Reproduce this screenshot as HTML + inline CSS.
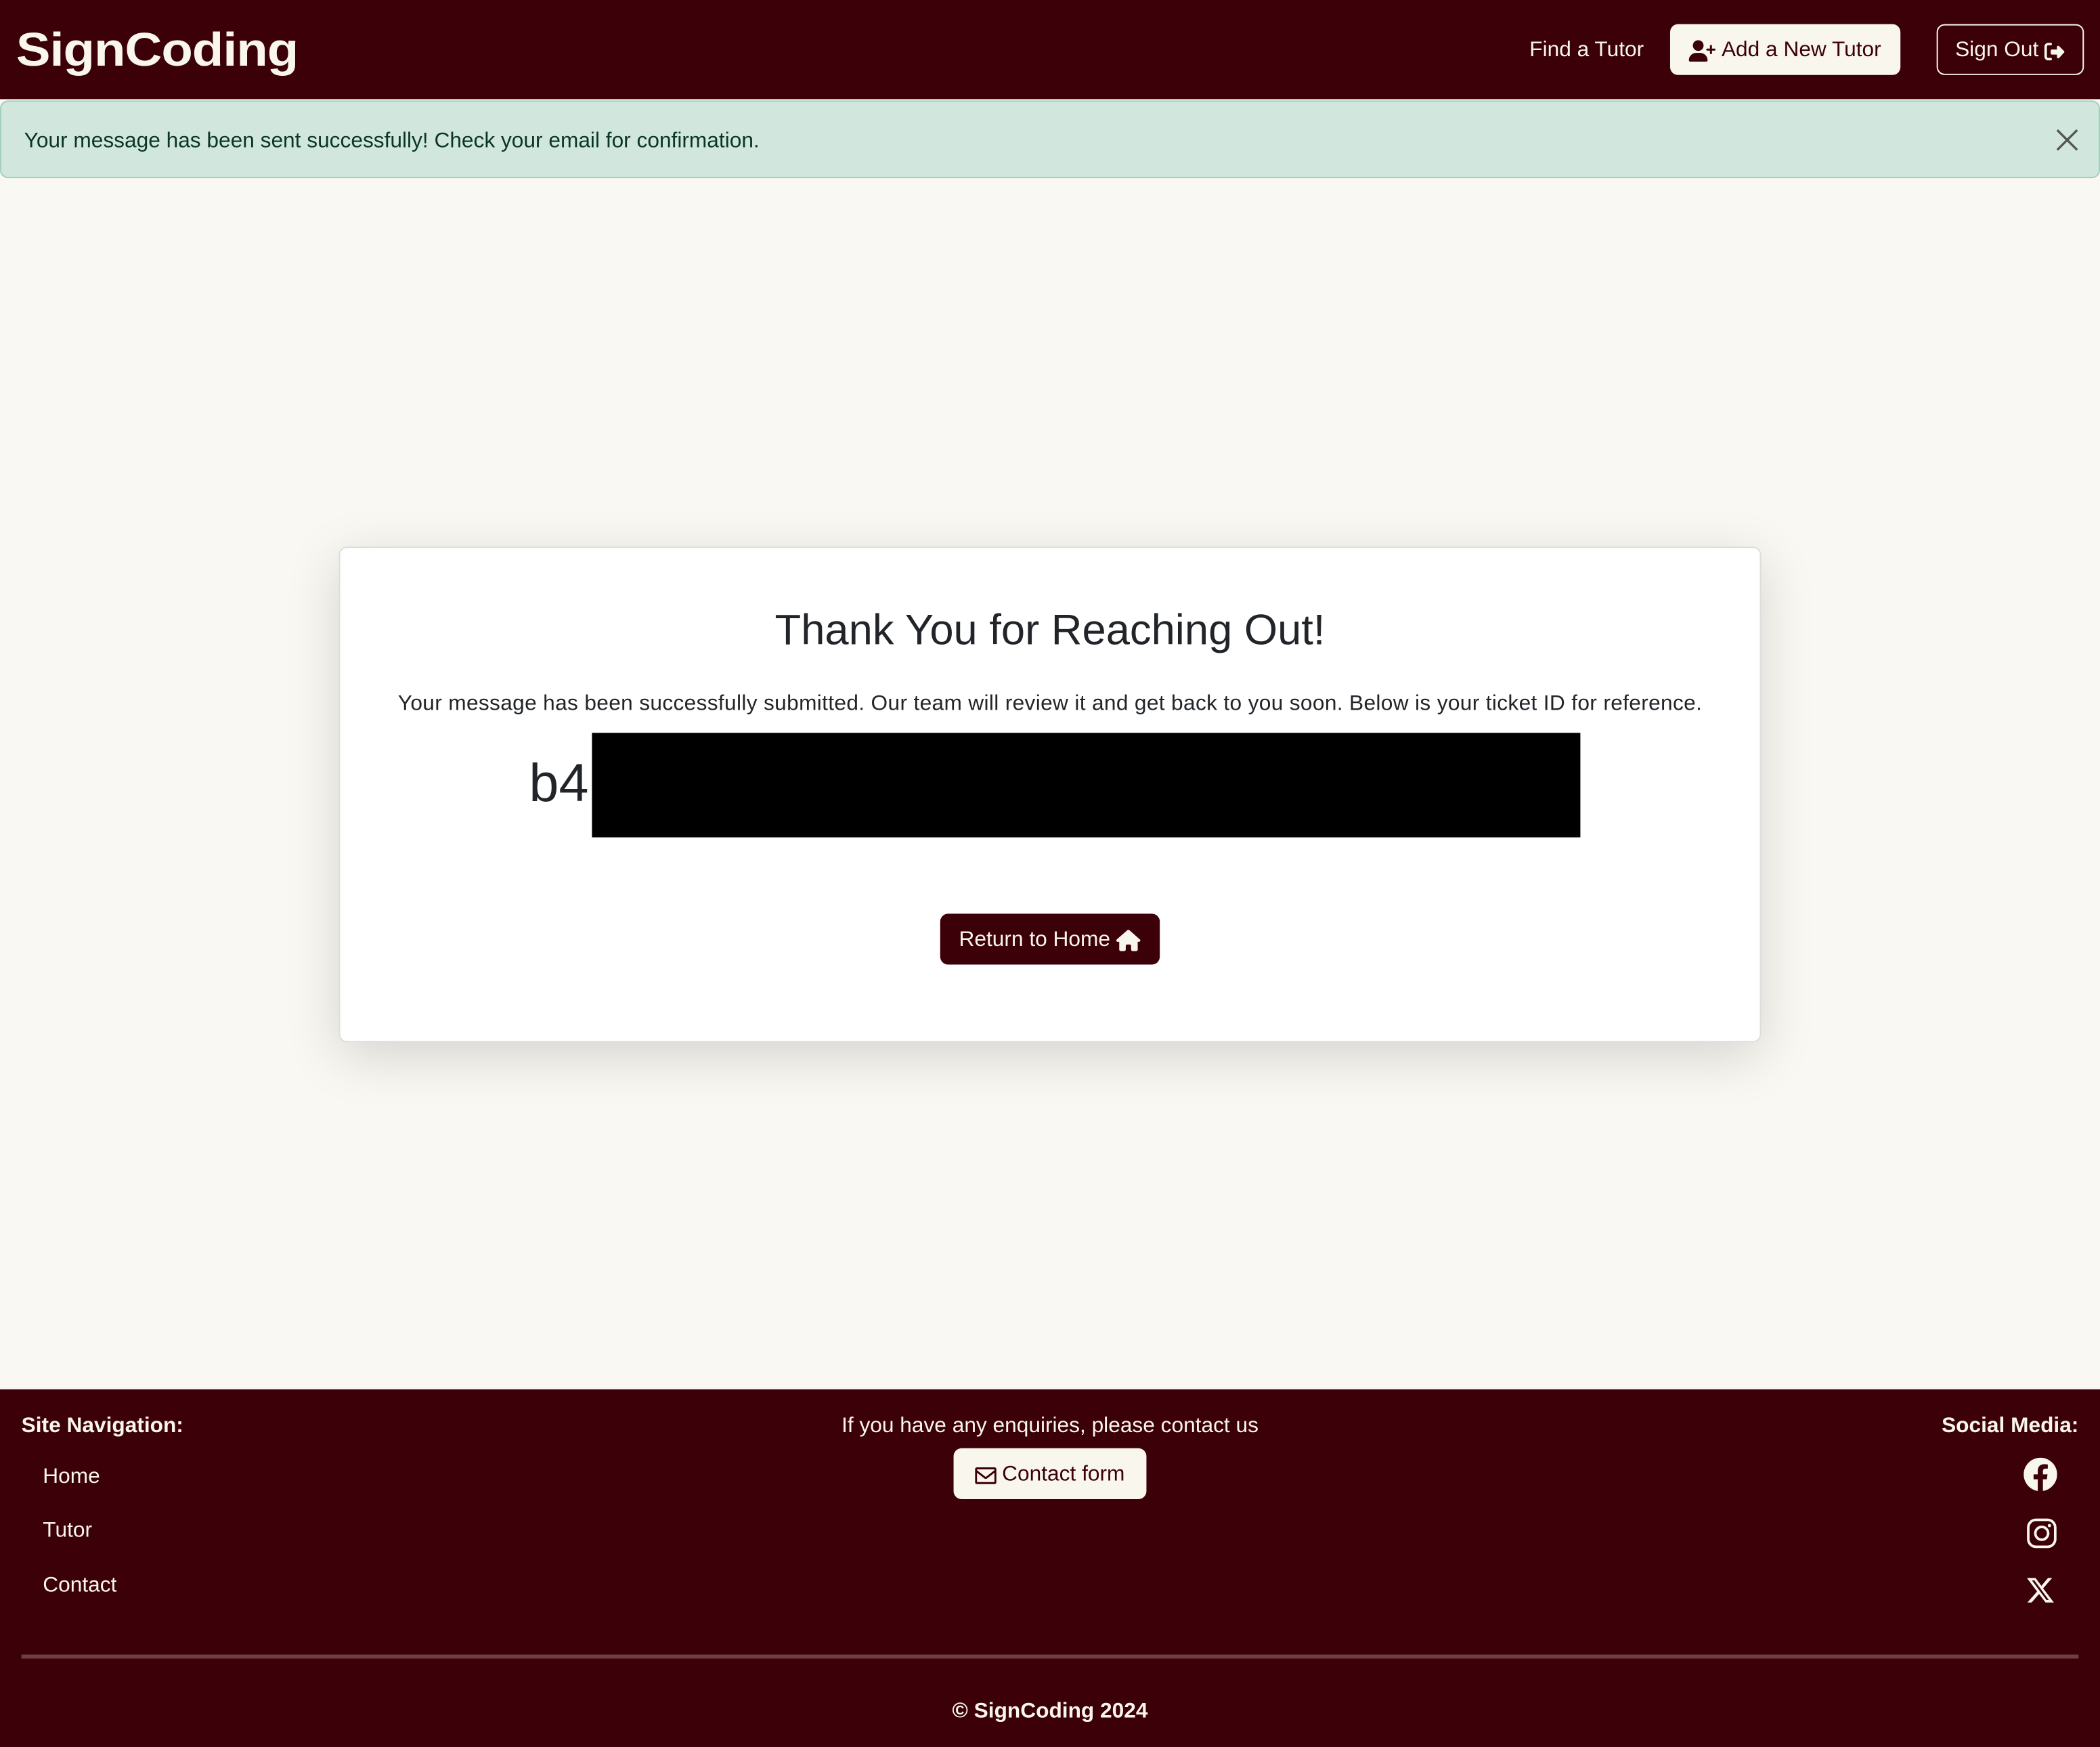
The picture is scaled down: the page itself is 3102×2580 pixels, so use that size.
<!DOCTYPE html>
<html><head><meta charset="utf-8"><style>
html,body{margin:0;padding:0;width:3102px;height:2580px;overflow:hidden;background:#f9f8f3;}
#w{position:absolute;left:0;top:0;width:1568px;height:1304px;transform:scale(1.97832,1.97853);transform-origin:0 0;font-family:"Liberation Sans",sans-serif;color:#212529;}
.a{position:absolute;}
.hdr{left:0;top:0;width:1568px;height:74px;background:#3b0008;}
.logo{left:12px;top:18px;font-size:35px;font-weight:bold;color:#f9f6ee;letter-spacing:-0.5px;transform:scaleX(1.1);transform-origin:0 0;line-height:40px;}
.btn{border-radius:6px;box-sizing:border-box;display:flex;align-items:center;justify-content:center;font-size:16px;padding-top:2px;}
.alert{left:0;top:75px;width:1568px;height:58px;box-sizing:border-box;background:#d1e7dd;border:1px solid #a3cfbb;border-radius:6px;color:#0a3622;font-size:16px;}
.card{left:253px;top:408px;width:1062px;height:370px;box-sizing:border-box;background:#fff;border:1px solid #ddd;border-radius:6px;box-shadow:0 10px 40px rgba(0,0,0,.15);}
.ftr{left:0;top:1037px;width:1568px;height:267px;background:#3b0008;color:#f9f6ee;font-size:16px;}
</style></head><body><div id="w">
<div class="a hdr">
 <div class="a logo">SignCoding</div>
 <div class="a" style="left:1142px;top:29px;color:#f9f6ee;font-size:16px;">Find a Tutor</div>
 <div class="a btn" style="left:1247px;top:18px;width:172px;height:38px;background:#f9f6ee;color:#3b0008;">
  <svg width="20" height="16" viewBox="0 0 640 512" style="margin-right:4px"><path fill="#3b0008" d="M96 128a128 128 0 1 1 256 0 128 128 0 1 1-256 0zM0 482c0-98 80-178 178-178h92c98 0 178 80 178 178 0 17-13 30-30 30H30c-17 0-30-13-30-30zM504 312v-64h-64c-13 0-24-11-24-24s11-24 24-24h64v-64c0-13 11-24 24-24s24 11 24 24v64h64c13 0 24 11 24 24s-11 24-24 24h-64v64c0 13-11 24-24 24s-24-11-24-24z"/></svg>Add a New Tutor</div>
 <div class="a btn" style="left:1446px;top:18px;width:110px;height:38px;border:1px solid #f9f6ee;color:#f9f6ee;">Sign Out
  <svg width="16" height="15" viewBox="0 0 512 512" style="margin-left:4px"><path fill="#f9f6ee" d="M502 279c9-9 9-25 0-34L374 117c-9-9-23-12-35-7s-20 17-20 30v64H192c-18 0-32 14-32 32v64c0 18 14 32 32 32h128v64c0 13 8 24 20 30s26 2 35-7zM160 96c18 0 32-14 32-32s-14-32-32-32H96C43 32 0 75 0 128v256c0 53 43 96 96 96h64c18 0 32-14 32-32s-14-32-32-32H96c-18 0-32-14-32-32V128c0-18 14-32 32-32z"/></svg></div>
</div>
<div class="a alert"><div class="a" style="left:17px;top:21px;">Your message has been sent successfully! Check your email for confirmation.</div>
 <svg class="a" style="left:1534px;top:20px" width="17" height="17" viewBox="0 0 16 16"><path d="M1 1L15 15M15 1L1 15" stroke="#555" stroke-width="1.6"/></svg></div>
<div class="a card">
 <div class="a" style="left:0;width:1060px;top:43px;text-align:center;font-size:32px;font-weight:500;">Thank You for Reaching Out!</div>
 <div class="a" style="left:0;width:1060px;top:108px;text-align:center;font-size:16px;letter-spacing:0.17px;">Your message has been successfully submitted. Our team will review it and get back to you soon. Below is your ticket ID for reference.</div>
 <div class="a" style="left:141px;top:154px;font-size:40px;font-weight:300;">b4</div>
 <div class="a" style="left:188px;top:138px;width:738px;height:78px;background:#000;"></div>
 <div class="a btn" style="left:448px;top:273px;width:164px;height:38px;background:#3b0008;color:#f9f6ee;">Return to Home
  <svg width="19" height="16" viewBox="0 0 576 512" style="margin-left:4px"><path fill="#f9f6ee" d="M575 256c0 18-15 32-32 32h-32l1 160c0 3 0 5 0 8v16c0 22-18 40-40 40h-16c-1 0-2 0-3 0h-59c-22 0-40-18-40-40v-88c0-18-14-32-32-32h-64c-18 0-32 14-32 32v88c0 22-18 40-40 40h-56c-1 0-3 0-4 0h-16c-22 0-40-18-40-40V288H32c-18 0-32-14-32-32 0-9 3-17 10-24L266 8c7-7 15-8 22-8s15 2 21 7l256 225c8 7 12 15 11 24z"/></svg></div>
</div>
<div class="a ftr">
 <div class="a" style="left:16px;top:19px;font-weight:bold;">Site Navigation:</div>
 <div class="a" style="left:32px;top:57px;">Home</div>
 <div class="a" style="left:32px;top:97px;">Tutor</div>
 <div class="a" style="left:32px;top:138px;">Contact</div>
 <div class="a" style="left:0;width:1568px;top:19px;text-align:center;">If you have any enquiries, please contact us</div>
 <div class="a btn" style="left:712px;top:44px;width:144px;height:38px;background:#f9f6ee;color:#3b0008;">
  <svg width="16" height="13" viewBox="0 0 512 400" style="margin-right:4px"><path fill="#3b0008" d="M48 0C21 0 0 21 0 48v304c0 27 21 48 48 48h416c27 0 48-21 48-48V48c0-27-21-48-48-48zM48 48h416v20L256 230 48 68zm0 81l179 139c17 13 41 13 58 0l179-139v223H48z"/></svg>Contact form</div>
 <div class="a" style="right:16px;top:19px;font-weight:bold;">Social Media:</div>
 <svg class="a" style="left:1511px;top:51px" width="25" height="25" viewBox="0 0 24 24"><path fill="#f9f6ee" d="M24 12a12 12 0 1 0-13.9 11.9v-8.4H7.1V12h3V9.4c0-3 1.8-4.7 4.5-4.7 1.3 0 2.7.2 2.7.2v3h-1.5c-1.5 0-2 .9-2 1.9V12h3.3l-.5 3.5h-2.8v8.4A12 12 0 0 0 24 12z"/></svg>
 <svg class="a" style="left:1513px;top:96px" width="23" height="23" viewBox="0 0 24 24"><rect x="1.5" y="1.5" width="21" height="21" rx="6" fill="none" stroke="#f9f6ee" stroke-width="2"/><circle cx="12" cy="12" r="5" fill="none" stroke="#f9f6ee" stroke-width="2"/><circle cx="18" cy="6" r="1.3" fill="#f9f6ee"/></svg>
 <svg class="a" style="left:1512px;top:139px" width="23" height="22" viewBox="0 0 24 24"><path fill="#f9f6ee" d="M18.2 2h3.4l-7.4 8.5L23 22h-6.8l-5.3-7-6.1 7H1.4l7.9-9L1 2h7l4.8 6.4zm-1.2 18h1.9L7.1 4H5.1z"/></svg>
 <div class="a" style="left:16px;top:198px;width:1536px;height:3px;background:#6f3f43;"></div>
 <div class="a" style="left:0;width:1568px;top:232px;text-align:center;font-weight:bold;">© SignCoding 2024</div>
</div>
</div></body></html>
